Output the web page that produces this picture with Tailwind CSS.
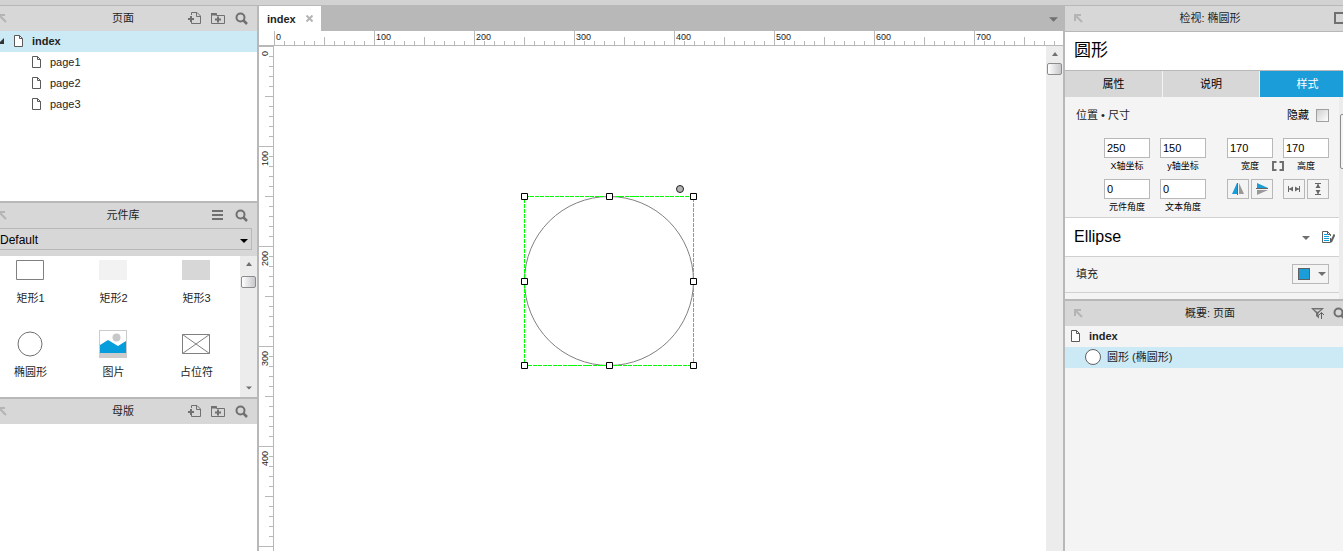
<!DOCTYPE html>
<html lang="zh-CN">
  <head>
    <meta charset="UTF-8">
    <meta name="viewport" content="width=device-width, initial-scale=1">
    <title>index</title>
    <script src="https://cdn.jsdelivr.net/npm/@tailwindcss/browser@4"></script>
  </head>
  <body class="flex h-screen flex-col overflow-hidden bg-white font-['Liberation_Sans','Noto_Sans_CJK_SC',sans-serif] text-[11px] leading-4 text-[#1e1e1e]">
    <!-- Shared icons -->
    <svg class="hidden" aria-hidden="true">
      <symbol id="dock" viewBox="0 0 9 9"><path d="M1 7V1h6M1.500 1.500l6.500 6.500" fill="none" stroke="#b4b4b4" stroke-width="2"/></symbol>
      <symbol id="search" viewBox="0 0 13 13"><circle cx="5.500" cy="5.500" r="4" fill="none" stroke="#707070" stroke-width="2"/><path d="M8.500 8.500l3.500 3.500" stroke="#707070" stroke-width="2.500"/></symbol>
      <symbol id="add-page" viewBox="0 0 13 14"><path d="M3.500 4V1.500H9L12.500 5v7.500h-9V11M8.500 1.500v4h4" fill="none" stroke="#707070"/><path d="M0 8h6M3 5v6" stroke="#707070" stroke-width="2"/></symbol>
      <symbol id="add-folder" viewBox="0 0 14 13"><path d="M.5 1.500h5v2h8v8H.5z" fill="none" stroke="#707070"/><path d="M0 1h5.500v2.500H0z" fill="#707070"/><path d="M4 7.500h6M7 4.500v6" stroke="#707070" stroke-width="2"/></symbol>
      <symbol id="page" viewBox="0 0 9 12"><path d="M.5.5h5l3 3v8h-8z" fill="#fff" stroke="#5a5a5a"/><path d="M5.500.5v3h3" fill="none" stroke="#5a5a5a"/></symbol>
      <symbol id="down" viewBox="0 0 8 4"><path d="M0 0h8L4 4z" fill="currentColor"/></symbol>
      <symbol id="up" viewBox="0 0 6 4"><path d="M0 4h6L3 0z" fill="#707070"/></symbol>
    </svg>

    <div class="h-[6px] shrink-0 border-b border-[#b8b8b8] bg-[#d2d2d2]"></div>

    <div class="flex min-h-0 flex-1">
      <!-- Left side -->
      <aside class="w-[259px] shrink-0 overflow-hidden border-r-2 border-[#b8b8b8]">
        <div class="-ml-[11px] flex h-full flex-col">
          <section class="h-[195px] shrink-0">
            <header class="grid h-[25px] grid-cols-[1fr_auto_1fr] items-center bg-[#d7d7d7] px-[9px] pb-px">
              <button aria-label="停靠"><svg class="size-[9px]"><use href="#dock"/></svg></button>
              <h2>页面</h2>
              <div class="flex items-center justify-end gap-[10px]">
                <button aria-label="添加页面"><svg class="h-[14px] w-[13px]"><use href="#add-page"/></svg></button>
                <button aria-label="添加文件夹"><svg class="h-[13px] w-[14px]"><use href="#add-folder"/></svg></button>
                <button aria-label="搜索"><svg class="size-[13px]"><use href="#search"/></svg></button>
              </div>
            </header>
            <ul>
              <li class="flex h-[21px] items-center bg-[#cbeaf6] pb-px pl-[9px] font-bold">
                <svg class="h-[6px] w-[6px]" viewBox="0 0 6 6"><path d="M6 0v6H0z" fill="#333"/></svg>
                <svg class="mr-[9px] ml-[10px] h-3 w-[9px]"><use href="#page"/></svg>
                <a href="#" class="text-[#1e1e1e]">index</a>
              </li>
              <li class="flex h-[21px] items-center gap-[9px] pb-px pl-[43px]"><svg class="h-3 w-[9px]"><use href="#page"/></svg><a href="#">page1</a></li>
              <li class="flex h-[21px] items-center gap-[9px] pb-px pl-[43px]"><svg class="h-3 w-[9px]"><use href="#page"/></svg><a href="#">page2</a></li>
              <li class="flex h-[21px] items-center gap-[9px] pb-px pl-[43px]"><svg class="h-3 w-[9px]"><use href="#page"/></svg><a href="#">page3</a></li>
            </ul>
          </section>

          <section class="shrink-0 border-t-2 border-[#b8b8b8]">
            <header class="grid h-[25px] grid-cols-[1fr_auto_1fr] items-center bg-[#d7d7d7] px-[9px] pb-px">
              <button aria-label="停靠"><svg class="size-[9px]"><use href="#dock"/></svg></button>
              <h2>元件库</h2>
              <div class="flex items-center justify-end gap-3">
                <button aria-label="菜单"><svg class="h-[10px] w-[11px]" viewBox="0 0 11 10"><path d="M0 1h11M0 5h11M0 9h11" stroke="#707070" stroke-width="2"/></svg></button>
                <button aria-label="搜索"><svg class="size-[13px]"><use href="#search"/></svg></button>
              </div>
            </header>
            <div class="relative h-[28px] bg-[#d7d7d7] pr-[5px]">
              <select aria-label="元件库" class="block h-[22px] w-full appearance-none border border-[#b8b8b8] pt-px pl-[10px] text-xs text-black">
                <option>Default</option>
              </select>
              <svg class="pointer-events-none absolute top-[11px] right-[9px] h-1 w-2 text-black"><use href="#down"/></svg>
            </div>
            <div class="flex h-[141px]">
              <ul class="grid flex-1 grid-cols-[repeat(3,83px)] content-start text-center">
                <li class="flex h-[74px] flex-col items-center gap-[6px]">
                  <svg class="mr-px size-[28px]" viewBox="0 0 28 28"><path d="M.5 4.500h27v19H.5z" fill="#fff" stroke="#808080"/></svg>矩形1
                </li>
                <li class="flex h-[74px] flex-col items-center gap-[6px]">
                  <svg class="mr-px size-[28px]" viewBox="0 0 28 28"><path d="M0 4h28v20H0z" fill="#f2f2f2"/></svg>矩形2
                </li>
                <li class="flex h-[74px] flex-col items-center gap-[6px]">
                  <svg class="mr-px size-[28px]" viewBox="0 0 28 28"><path d="M0 4h28v20H0z" fill="#d7d7d7"/></svg>矩形3
                </li>
                <li class="flex flex-col items-center gap-[6px]">
                  <svg class="mr-px size-[28px]" viewBox="0 0 28 28"><circle cx="14" cy="14" r="12" fill="#fff" stroke="#707070"/></svg>椭圆形
                </li>
                <li class="flex flex-col items-center gap-[6px]">
                  <svg class="mr-px size-[28px]" viewBox="0 0 28 28"><path d="M0 0h28v28H0z" fill="#ccc"/><path d="M1 1h26v22H1z" fill="#fff"/><circle cx="17.500" cy="7.500" r="4" fill="#c8c8c8"/><path d="M1 15l8-5 10 6 8-5v12H1z" fill="#069ddc"/></svg>图片
                </li>
                <li class="flex flex-col items-center gap-[6px]">
                  <svg class="mr-px size-[28px]" viewBox="0 0 28 28"><path d="M.5 4.500h27v19H.5zM.5 4.500l27 19M27.500 4.500l-27 19" fill="#fff" stroke="#808080"/></svg>占位符
                </li>
              </ul>
              <div class="flex w-[17px] flex-col items-center bg-[#ececec] pt-[6px] pb-[7px]">
                <svg class="h-1 w-[6px]"><use href="#up"/></svg>
                <div class="mt-[10px] h-3 w-[15px] rounded-xs border border-[#8c8c8c] bg-linear-to-r from-white to-[#c8c8cc]"></div>
                <svg class="mt-auto h-1 w-[6px] text-[#707070]"><use href="#down"/></svg>
              </div>
            </div>
          </section>

          <section class="flex-1 border-t-2 border-[#b8b8b8]">
            <header class="grid h-[25px] grid-cols-[1fr_auto_1fr] items-center bg-[#d7d7d7] px-[9px] pb-px">
              <button aria-label="停靠"><svg class="size-[9px]"><use href="#dock"/></svg></button>
              <h2>母版</h2>
              <div class="flex items-center justify-end gap-[10px]">
                <button aria-label="添加母版"><svg class="h-[14px] w-[13px]"><use href="#add-page"/></svg></button>
                <button aria-label="添加文件夹"><svg class="h-[13px] w-[14px]"><use href="#add-folder"/></svg></button>
                <button aria-label="搜索"><svg class="size-[13px]"><use href="#search"/></svg></button>
              </div>
            </header>
          </section>
        </div>
      </aside>

      <!-- Canvas -->
      <main class="flex min-w-0 flex-1 flex-col">
        <div class="flex h-[25px] shrink-0 items-center justify-between bg-[#b8b8b8] pr-[5px]">
          <div class="flex h-full items-center gap-[10px] bg-white px-2 font-bold">
            <a href="#">index</a>
            <button aria-label="关闭"><svg class="size-[7px]" viewBox="0 0 7 7"><path d="M.5.5l6 6M6.500.5l-6 6" stroke="#b4b4b4" stroke-width="2"/></svg></button>
          </div>
          <button aria-label="标签列表" class="text-[#707070]"><svg class="mt-[2px] h-[5px] w-[9px]"><use href="#down"/></svg></button>
        </div>
        <div class="relative h-[15px] shrink-0 overflow-hidden border-b border-[#b8b8b8] pl-[15px]">
          <svg class="h-[14px] w-full">
            <pattern id="ticks-x" width="100" height="14" patternUnits="userSpaceOnUse">
              <path d="M.5 0v14M10.500 10v4M20.500 10v4M30.500 10v4M40.500 10v4M50.500 6v8M60.500 10v4M70.500 10v4M80.500 10v4M90.500 10v4" stroke="#b8b8b8"/>
            </pattern>
            <rect width="100%" height="14" fill="url(#ticks-x)"/>
          </svg>
          <div class="absolute top-0 left-[17px] flex text-[9px] leading-[12px]">
            <span class="w-[100px]">0</span><span class="w-[100px]">100</span><span class="w-[100px]">200</span><span class="w-[100px]">300</span><span class="w-[100px]">400</span><span class="w-[100px]">500</span><span class="w-[100px]">600</span><span class="w-[100px]">700</span>
          </div>
        </div>
        <div class="flex min-h-0 flex-1">
          <div class="relative w-[15px] shrink-0 overflow-hidden border-r border-[#b8b8b8]">
            <svg class="h-full w-[14px]">
              <pattern id="ticks-y" width="14" height="100" patternUnits="userSpaceOnUse">
                <path d="M0 .5h14M10 10.500h4M10 20.500h4M10 30.500h4M10 40.500h4M6 50.500h8M10 60.500h4M10 70.500h4M10 80.500h4M10 90.500h4" stroke="#b8b8b8"/>
              </pattern>
              <rect width="14" height="100%" fill="url(#ticks-y)"/>
            </svg>
            <div class="absolute top-[5px] left-0 text-[9px] leading-[12px]">
              <div class="h-[100px]"><span class="block rotate-180 [writing-mode:vertical-rl]">0</span></div>
              <div class="h-[100px]"><span class="block rotate-180 [writing-mode:vertical-rl]">100</span></div>
              <div class="h-[100px]"><span class="block rotate-180 [writing-mode:vertical-rl]">200</span></div>
              <div class="h-[100px]"><span class="block rotate-180 [writing-mode:vertical-rl]">300</span></div>
              <div class="h-[100px]"><span class="block rotate-180 [writing-mode:vertical-rl]">400</span></div>
            </div>
          </div>
          <div class="relative min-w-0 flex-1 overflow-hidden">
            <!-- Selected ellipse with its resize handles -->
            <svg class="absolute top-[138px] left-[246px] h-[186px] w-[178px]" viewBox="0 0 178 186">
              <circle cx="89" cy="97" r="84.500" fill="#fff" stroke="#808080"/>
              <path d="M4.500 12.500h169v169h-169z" fill="none" stroke="#0f0" stroke-dasharray="4 1" shape-rendering="crispEdges"/>
              <g fill="#fff" stroke="#000">
                <path d="M1.500 9.500h6v6h-6zM86.500 9.500h6v6h-6zM170.500 9.500h6v6h-6zM1.500 94.500h6v6h-6zM170.500 94.500h6v6h-6zM1.500 178.500h6v6h-6zM86.500 178.500h6v6h-6zM170.500 178.500h6v6h-6z"/>
              </g>
              <circle cx="160" cy="5" r="3.500" fill="#b4b4b4" stroke="#222"/>
            </svg>
          </div>
          <div class="flex w-[17px] shrink-0 flex-col items-center bg-[#ececec] pt-[6px]">
            <svg class="h-1 w-[6px]"><use href="#up"/></svg>
            <div class="mt-[7px] h-3 w-[15px] rounded-xs border border-[#8c8c8c] bg-linear-to-r from-white to-[#c8c8cc]"></div>
          </div>
        </div>
      </main>

      <!-- Right side -->
      <aside class="w-[280px] shrink-0 overflow-hidden border-l-2 border-[#b8b8b8] bg-[#f4f4f4]">
        <div class="w-[290px]">
          <header class="grid h-[26px] grid-cols-[1fr_auto_1fr] items-center border-b border-[#b8b8b8] bg-[#d7d7d7] px-[9px] pb-px">
            <button aria-label="停靠"><svg class="size-[9px]"><use href="#dock"/></svg></button>
            <h2>检视: 椭圆形</h2>
            <button aria-label="页面" class="ml-auto"><svg class="size-[12px]" viewBox="0 0 12 12"><path d="M1 1h10v10H1z" fill="none" stroke="#707070" stroke-width="2"/></svg></button>
          </header>
          <input aria-label="名称" value="圆形" class="block h-[39px] w-full border-b border-[#b8b8b8] bg-white px-[9px] pb-[5px] text-[17px] text-black">
          <nav class="grid h-[26px] grid-cols-[97px_96px_1fr] gap-px text-black">
            <button class="bg-[#d7d7d7]">属性</button>
            <button class="bg-[#d7d7d7]">说明</button>
            <button class="bg-[#1a9dd9] text-white">样式</button>
          </nav>
          <div class="flex h-[202px]">
            <div class="w-[274px]">
              <div class="h-[121px] border-b border-[#d0d0d0] pt-[10px] pr-[10px] pl-[11px]">
                <div class="flex justify-between">
                  <h3>位置 • 尺寸</h3>
                  <label class="flex items-center gap-[7px] text-black">隐藏<input type="checkbox" class="size-[13px] appearance-none border border-[#a0a0a0] bg-linear-to-br from-[#d0d0d0] to-white"></label>
                </div>
                <div class="mt-[15px] flex justify-end gap-[21px] text-center text-[9px] leading-[16px] text-black">
                  <div class="grid grid-cols-[46px_46px] gap-x-[10px] gap-y-[5px]">
                    <label><input value="250" class="block h-5 w-full border border-[#b8b8b8] bg-white px-[2px] text-[11px]">X轴坐标</label>
                    <label><input value="150" class="block h-5 w-full border border-[#b8b8b8] bg-white px-[2px] text-[11px]">y轴坐标</label>
                    <label class="whitespace-nowrap"><input value="0" class="block h-5 w-full border border-[#b8b8b8] bg-white px-[2px] text-[11px]">元件角度</label>
                    <label class="whitespace-nowrap"><input value="0" class="block h-5 w-full border border-[#b8b8b8] bg-white px-[2px] text-[11px]">文本角度</label>
                  </div>
                  <div class="relative grid grid-cols-[46px_46px] content-start gap-x-[10px] gap-y-[5px]">
                    <label><input value="170" class="block h-5 w-full border border-[#b8b8b8] bg-white px-[2px] text-[11px]">宽度</label>
                    <label><input value="170" class="block h-5 w-full border border-[#b8b8b8] bg-white px-[2px] text-[11px]">高度</label>
                    <button aria-label="锁定比例" class="absolute top-[23px] left-[45px]"><svg class="h-[10px] w-3" viewBox="0 0 12 10"><path d="M4.500 1H1v8h3.500M7.500 1H11v8H7.500" fill="none" stroke="#707070" stroke-width="2"/></svg></button>
                    <div class="flex justify-between">
                      <button aria-label="水平翻转" class="grid h-5 w-[22px] place-items-center border border-[#b8b8b8]"><svg class="h-3 w-3" viewBox="0 0 12 12"><path d="M5 0v11H0z" fill="#1a9dd9"/><path d="M7 0v11h5z" fill="#999"/><path d="M5.500 0v12" stroke="#666"/></svg></button>
                      <button aria-label="垂直翻转" class="grid h-5 w-[22px] place-items-center border border-[#b8b8b8]"><svg class="h-3 w-3" viewBox="0 0 12 12"><path d="M1 0v5h11z" fill="#1a9dd9"/><path d="M1 12V7h11z" fill="#999"/><path d="M0 5.500h12" stroke="#666"/></svg></button>
                    </div>
                    <div class="flex justify-between">
                      <button aria-label="适应宽度" class="grid h-5 w-[22px] place-items-center border border-[#b8b8b8]"><svg class="h-3 w-3" viewBox="0 0 12 12"><path d="M.5 3v6M11.500 3v6M1 6h4M7 6h4" stroke="#666"/><path d="M1 6l4-2.500v5zM11 6L7 3.500v5z" fill="#666"/></svg></button>
                      <button aria-label="适应高度" class="grid h-5 w-[22px] place-items-center border border-[#b8b8b8]"><svg class="h-3 w-3" viewBox="0 0 12 12"><path d="M3 .5h6M3 11.500h6M6 1v4M6 7v4" stroke="#666"/><path d="M6 1l2.500 4h-5zM6 11l2.500-4h-5z" fill="#666"/></svg></button>
                    </div>
                  </div>
                </div>
              </div>
              <div class="flex h-[39px] items-center border-b border-[#d0d0d0] bg-white pr-1 pl-[9px]">
                <span class="flex-1 text-base text-black">Ellipse</span>
                <button aria-label="样式" class="mr-3 text-[#707070]"><svg class="mt-px h-1 w-2"><use href="#down"/></svg></button>
                <button aria-label="更新样式"><svg class="h-3 w-[13px]" viewBox="0 0 13 12"><path d="M8.500 7v4.500h-8V.5h5l3 3V5" fill="#fff" stroke="#606060"/><path d="M5.500 0v3.500h3" fill="none" stroke="#606060"/><path d="M2 3.500h3M2 5.500h5M2 7.500h5M2 9.500h5" stroke="#069ddc"/><path d="M12.500 3.500L9 11" stroke="#606060" stroke-width="2"/></svg></button>
              </div>
              <div class="flex h-[36px] items-center justify-between border-b border-[#d0d0d0] pr-[10px] pb-px pl-[11px]">
                <h3>填充</h3>
                <button aria-label="填充颜色" class="flex h-5 w-[37px] items-center justify-between border border-[#b8b8b8] pr-[2px] pl-[5px] text-[#707070]"><span class="size-3 border border-[#606060] bg-[#1a9dd9]"></span><svg class="h-1 w-2"><use href="#down"/></svg></button>
              </div>
            </div>
            <div class="flex-1 bg-[#ececec] pt-[17px] pl-px">
              <div class="h-[55px] rounded-xs border border-[#8c8c8c] bg-[#f4f4f4]"></div>
            </div>
          </div>

          <section class="border-t-2 border-[#b8b8b8]">
            <header class="grid h-[25px] grid-cols-[1fr_auto_1fr] items-center bg-[#d7d7d7] px-[9px] pb-px">
              <button aria-label="停靠"><svg class="size-[9px]"><use href="#dock"/></svg></button>
              <h2>概要: 页面</h2>
              <div class="flex items-center justify-end gap-2 pr-[-1px]">
                <button aria-label="筛选"><svg class="h-[11px] w-[14px]" viewBox="0 0 14 11"><path d="M0 0h13L8 5v5.500L5 8V5z" fill="#707070"/><path d="M3 1.500h7L6.500 4z" fill="#d7d7d7"/><path d="M10.500 11V4.500M8 7l2.500-2.500L13 7" fill="none" stroke="#d7d7d7" stroke-width="3"/><path d="M10.500 11V4.500M8 7l2.500-2.500L13 7" fill="none" stroke="#606060"/></svg></button>
                <button aria-label="搜索"><svg class="size-[13px]"><use href="#search"/></svg></button>
              </div>
            </header>
            <ul>
              <li class="flex h-[21px] items-center gap-[9px] pb-px pl-[6px] font-bold"><svg class="h-3 w-[9px]"><use href="#page"/></svg><a href="#">index</a></li>
              <li class="flex h-[21px] items-center gap-[6px] bg-[#cbeaf6] pb-px pl-5"><svg class="size-4" viewBox="0 0 16 16"><circle cx="8" cy="8" r="7.500" fill="#fff" stroke="#606060"/></svg><a href="#">圆形 (椭圆形)</a></li>
            </ul>
          </section>
        </div>
      </aside>
    </div>
  </body>
</html>
